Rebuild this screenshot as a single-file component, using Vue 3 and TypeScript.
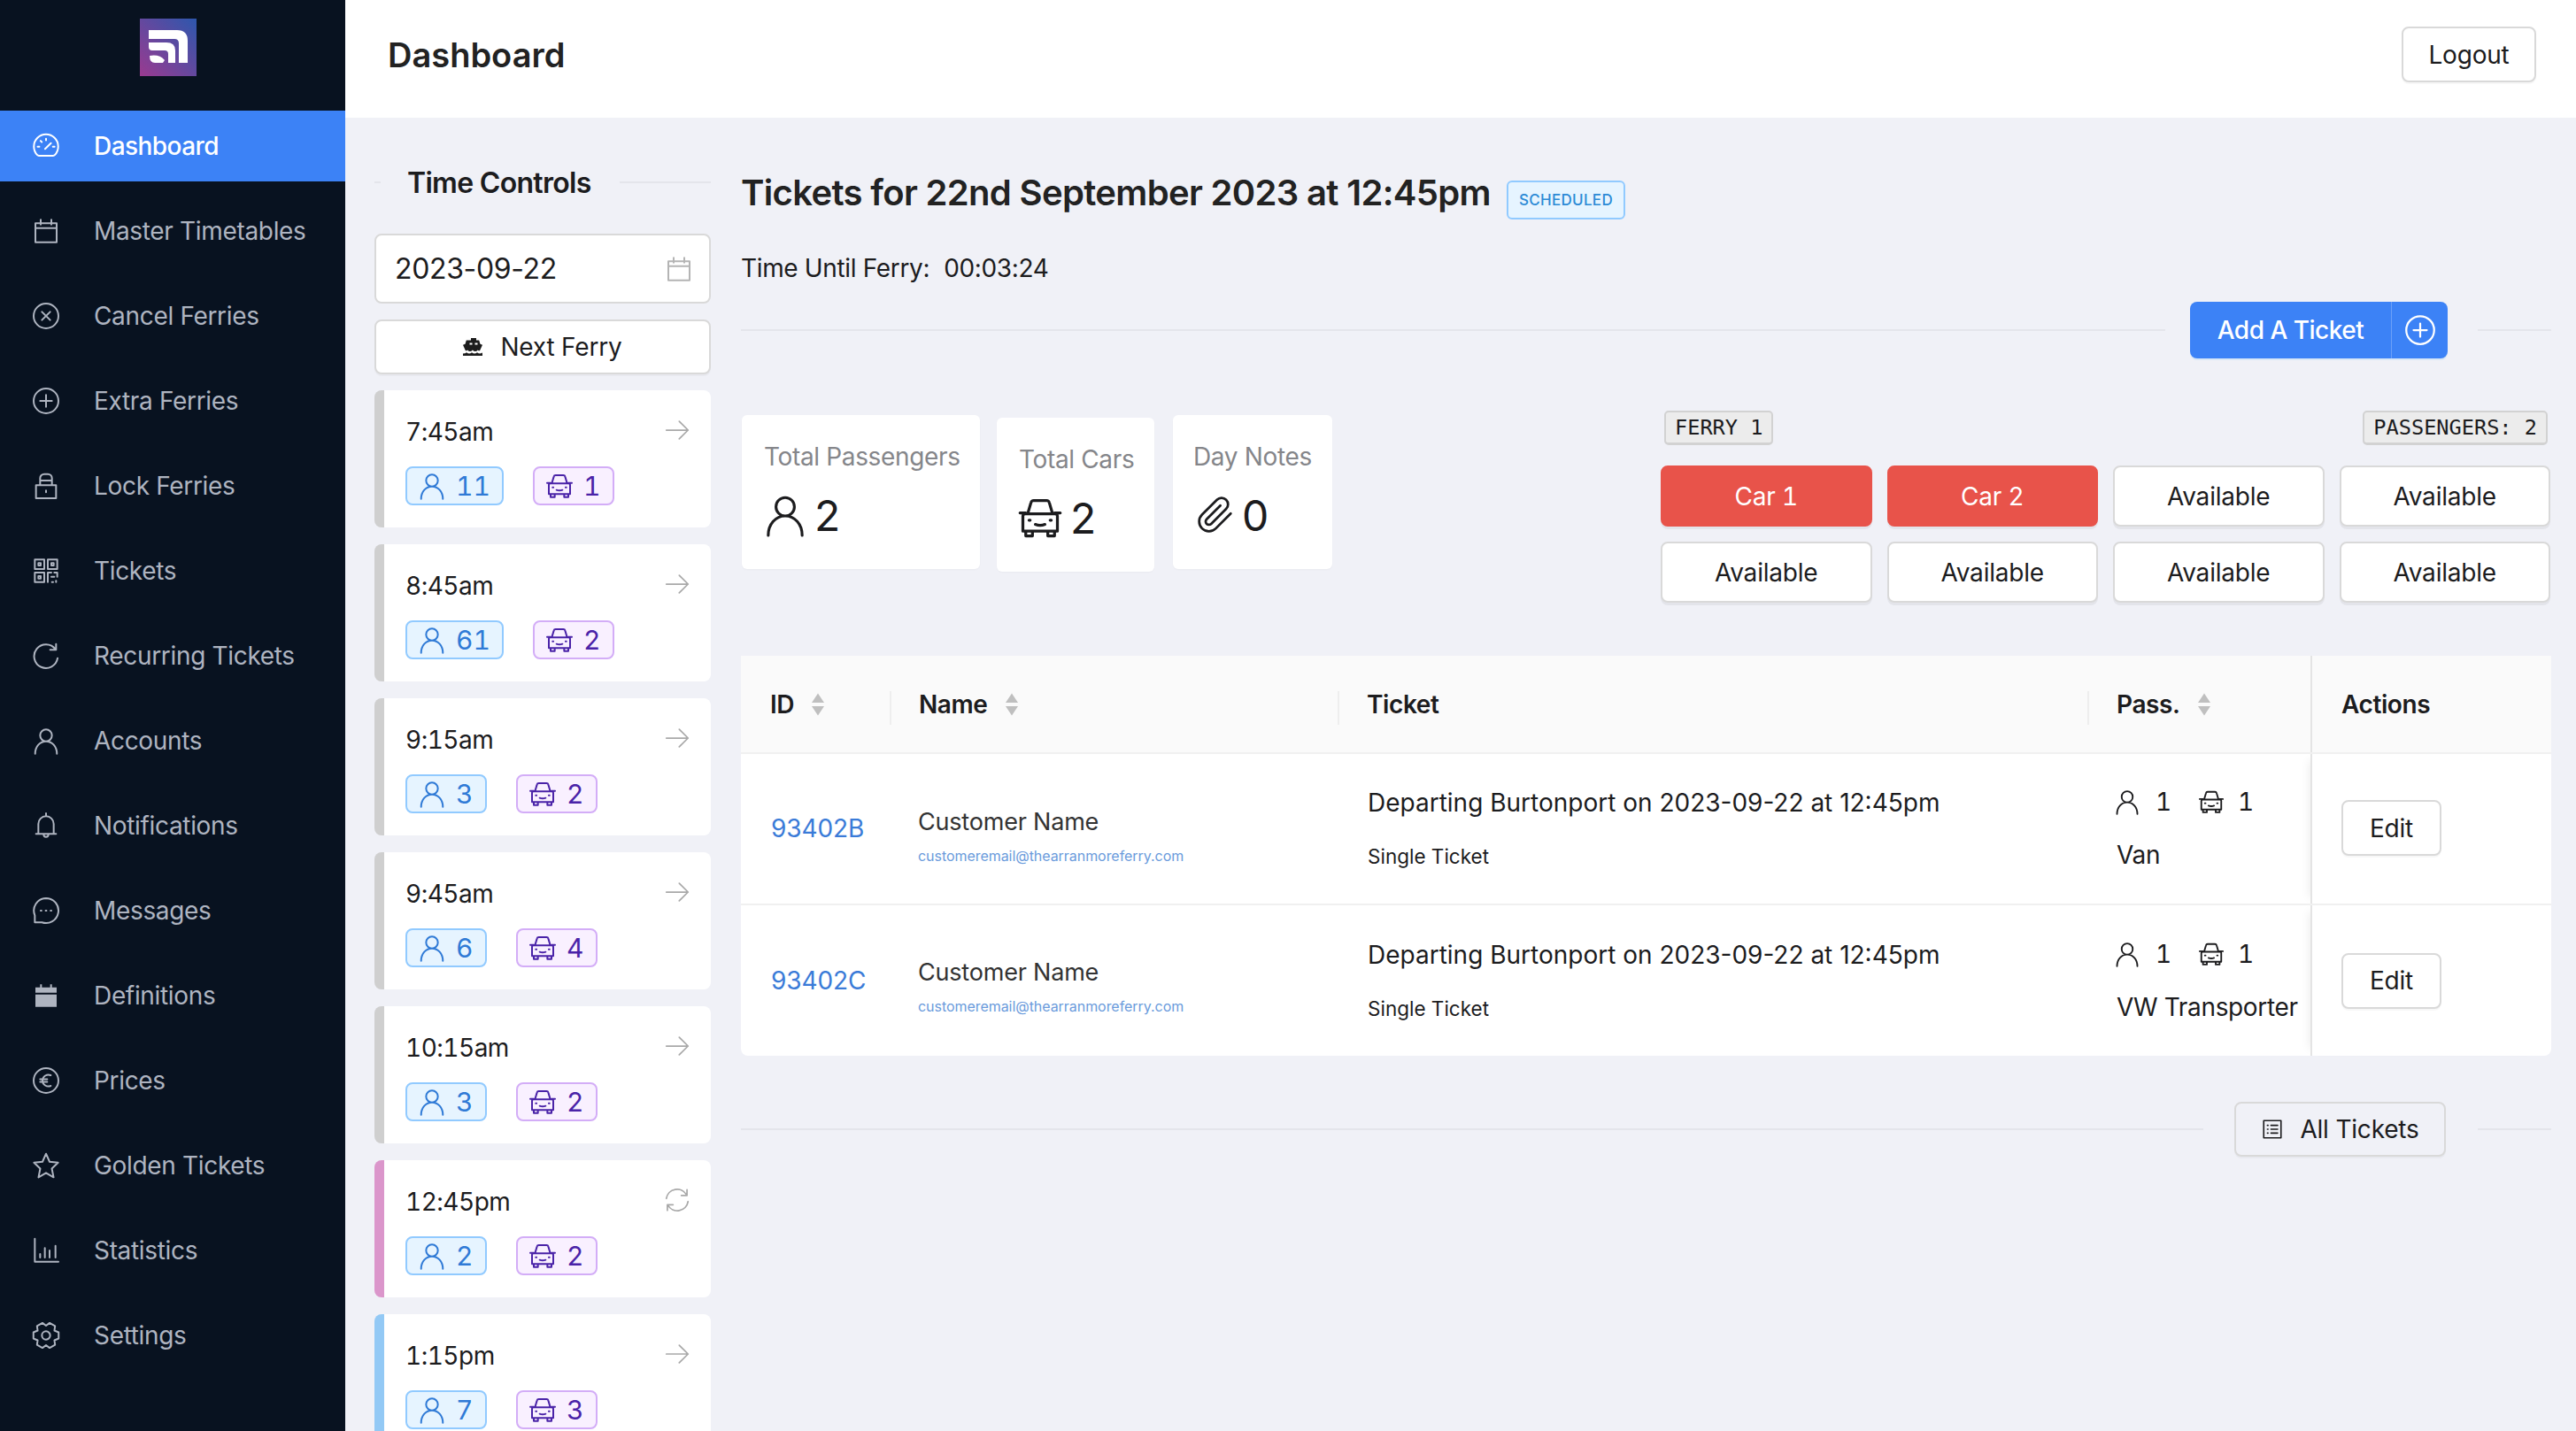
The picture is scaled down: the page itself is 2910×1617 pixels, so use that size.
<script setup lang="ts">
const gear = (() => {
  const pt = (deg: number, r: number) => {
    const a = ((deg - 90) * Math.PI) / 180
    return `${(12 + r * Math.cos(a)).toFixed(2)} ${(12 + r * Math.sin(a)).toFixed(2)}`
  }
  let d = ''
  for (let k = 0; k < 6; k++) {
    const c = k * 60 + 30
    d += `${k === 0 ? 'M' : 'L'}${pt(c - 14, 11)} L${pt(c + 14, 11)} L${pt(c + 30, 8.2)} `
  }
  return d + 'Z M15.5 12a3.5 3.5 0 1 1-7 0 3.5 3.5 0 0 1 7 0Z'
})()

const icons: Record<string, string> = {
  gauge: 'M4.6 19.6A10.3 10.3 0 1 1 19.4 19.6Q18.9 20.2 18 20.2H6Q5.1 20.2 4.6 19.6Z M11.2 14.4 16.2 9.6 M12 5.8v1.4 M7.4 7.6l1 1 M4.9 12.6h1.4 M17.8 12.6h1.4',
  calendar: 'M3 5.5h18v16H3z M3 9.5h18 M7.5 2.5v4 M16.5 2.5v4',
  cancel: 'M12 1.5a10.5 10.5 0 1 1 0 21 10.5 10.5 0 0 1 0-21Z M8.5 8.5l7 7 M15.5 8.5l-7 7',
  plus: 'M12 1.5a10.5 10.5 0 1 1 0 21 10.5 10.5 0 0 1 0-21Z M12 7v10 M7 12h10',
  lock: 'M3.5 11.5h17v11h-17z M7 11.5V5.5a3.5 3.5 0 0 1 3.5-3.5h3A3.5 3.5 0 0 1 17 5.5v6 M7 7.5h10 M12 16v1.5',
  qr: 'M2.5 2.5h8v8h-8z M13.5 2.5h8v8h-8z M2.5 13.5h8v8h-8z M5.5 5.5h2v2h-2z M16.5 5.5h2v2h-2z M5.5 16.5h2v2h-2z M13.5 21.5v-8h3 M19 13.5h2.5v3.5 M16.5 17h2.5 M17 21.5h1 M20.5 20.5v1',
  recur: 'M20 6.5A10 10 0 1 0 21.8 14 M20.5 2v5h-5',
  user: 'M12 2.5a5 5 0 1 1 0 10 5 5 0 0 1 0-10Z M2.8 23c0-6 4-10.5 9.2-10.5S21.2 17 21.2 23',
  bell: 'M3.5 19h17 M5.5 19v-8.5a6.5 6.5 0 0 1 13 0V19 M12 4V1.5 M10 19.5a2 2 0 0 0 4 0',
  msg: 'M12 1.5a10.5 10.5 0 1 1-3.5 20.4H2.5V16A10.5 10.5 0 0 1 12 1.5Z M7.5 12h.6 M11.7 12h.6 M15.9 12h.6',
  euro: 'M12 1.5a10.5 10.5 0 1 1 0 21 10.5 10.5 0 0 1 0-21Z M16 7.5a5 5 0 0 0-7 4.5 5 5 0 0 0 7 4.5 M7 10.8h6 M7 13.2h6',
  star: 'M12 2l3 6.8 7.2.8-5.3 5 1.5 7.4L12 18.2 5.6 22l1.5-7.4-5.3-5 7.2-.8Z',
  stats: 'M2.5 2v19.5h20 M7 18v-3 M11 18v-8 M15 18v-6 M20 18V8',
  gear,
  car: 'M5.5 10l1.7-5.8A1.6 1.6 0 0 1 8.7 3h6.6a1.6 1.6 0 0 1 1.5 1.2L18.5 10 M4.2 10h15.6A1.2 1.2 0 0 1 21 11.2V19H3v-7.8A1.2 1.2 0 0 1 4.2 10Z M4.5 19v2.5h3.5V19 M16 19v2.5h3.5V19 M1.5 9.5h3 M19.5 9.5h3 M9.5 15.5q2.5 1 5 0 M6.2 13.3h.6 M17.2 13.3h.6',
  arrow: 'M1.5 12h21 M14 3.5l8.5 8.5-8.5 8.5',
  refresh: 'M1.5 10.5A10.5 10.5 0 0 1 21 7 M21.5 2v5.5H16 M22.5 13.5A10.5 10.5 0 0 1 3 17 M2.5 22v-5.5H8',
  clip: 'M21.44 11.05l-9.19 9.19a6 6 0 0 1-8.49-8.49l9.19-9.19a4 4 0 0 1 5.66 5.66l-9.2 9.19a2 2 0 0 1-2.83-2.83l8.49-8.48',
  list: 'M3 3h18v18H3z M10.5 8h7 M10.5 12h7 M10.5 16h7 M6.8 8h.7 M6.8 12h.7 M6.8 16h.7',
}

const navItems = [
  { label: 'Dashboard', icon: 'gauge', active: true },
  { label: 'Master Timetables', icon: 'calendar' },
  { label: 'Cancel Ferries', icon: 'cancel' },
  { label: 'Extra Ferries', icon: 'plus' },
  { label: 'Lock Ferries', icon: 'lock' },
  { label: 'Tickets', icon: 'qr' },
  { label: 'Recurring Tickets', icon: 'recur' },
  { label: 'Accounts', icon: 'user' },
  { label: 'Notifications', icon: 'bell' },
  { label: 'Messages', icon: 'msg' },
  { label: 'Definitions', icon: 'solid' },
  { label: 'Prices', icon: 'euro' },
  { label: 'Golden Tickets', icon: 'star' },
  { label: 'Statistics', icon: 'stats' },
  { label: 'Settings', icon: 'gear' },
]

const times = [
  { time: '7:45am', pax: '11', cars: '1', tone: 'grey', icon: 'arrow' },
  { time: '8:45am', pax: '61', cars: '2', tone: 'grey', icon: 'arrow' },
  { time: '9:15am', pax: '3', cars: '2', tone: 'grey', icon: 'arrow' },
  { time: '9:45am', pax: '6', cars: '4', tone: 'grey', icon: 'arrow' },
  { time: '10:15am', pax: '3', cars: '2', tone: 'grey', icon: 'arrow' },
  { time: '12:45pm', pax: '2', cars: '2', tone: 'pink', icon: 'refresh' },
  { time: '1:15pm', pax: '7', cars: '3', tone: 'blue', icon: 'arrow' },
]

const stats = [
  { label: 'Total Passengers', value: '2', icon: 'user', cls: 'stat-a' },
  { label: 'Total Cars', value: '2', icon: 'car', cls: 'stat-b' },
  { label: 'Day Notes', value: '0', icon: 'clip', cls: 'stat-c' },
]

const spaces = ['Car 1', 'Car 2', 'Available', 'Available', 'Available', 'Available', 'Available', 'Available']

const tickets = [
  { id: '93402B', vehicle: 'Van' },
  { id: '93402C', vehicle: 'VW Transporter' },
]
</script>

<template>
  <div class="app">
    <aside class="sidebar">
      <div class="logo-wrap">
        <svg class="logo" viewBox="0 0 64 65">
          <defs>
            <linearGradient id="lg" x1="0" y1="1" x2="1" y2="0">
              <stop offset="0" stop-color="#9a3a90" />
              <stop offset="1" stop-color="#2d57ad" />
            </linearGradient>
          </defs>
          <rect width="64" height="65" fill="url(#lg)" />
          <path fill="#fff" d="M10 13H42Q54 13 54 25V50H44V28Q44 23 39 23H10Z M10 27H30Q40 27 40 36V50H32V40Q32 36 28 36H14Q10 36 10 32Z M11 42Q22 40 28 47L26 50H17Q11 50 11 42Z" />
        </svg>
      </div>
      <nav class="nav">
        <a v-for="item in navItems" :key="item.label" class="nav-item" :class="{ active: item.active }">
          <svg v-if="item.icon === 'solid'" class="nav-icon" viewBox="0 0 24 24">
            <path class="solid" d="M3 5h18v4.5H3z M3 11h18v10.5H3z M7 2.5h1.5V5H7z M15.5 2.5H17V5h-1.5z" />
          </svg>
          <svg v-else class="nav-icon" viewBox="0 0 24 24"><path class="line" :d="icons[item.icon]" /></svg>
          <span>{{ item.label }}</span>
        </a>
      </nav>
    </aside>

    <div class="page">
      <header class="topbar">
        <h1>Dashboard</h1>
        <button class="btn logout">Logout</button>
      </header>

      <div class="content">
        <section class="times">
          <div class="divider-head"><i class="stub"></i><h2>Time Controls</h2><i class="rule"></i></div>
          <div class="date-input">
            <span>2023-09-22</span>
            <svg class="date-ic" viewBox="0 0 24 24"><path class="line" :d="icons.calendar" /></svg>
          </div>
          <button class="btn next">
            <svg class="ferry-ic" viewBox="0 0 24 20">
              <path fill="#1c1c1c" d="M9 0h6v2.5h3.2l1.3 4.3 2.5 1-3 6.4q-1.3.3-2.2-.8-1.3 1.6-2.9 1.6t-3-1.6q-1.3 1.6-2.9 1.6t-2.9-1.6q-.9 1.1-2.2.8L0 7.8l2.5-1 1.3-4.3H9Z M0 17.5q3 0 4-1.2 1.5 1.2 3 1.2t3-1.2q1.5 1.2 3 1.2t3-1.2q1.5 1.2 3 1.2t2-.8 1 .8V20H0Z" />
              <path fill="#fff" d="M7.5 5.5h3v2h-3z M13.5 5.5h3v2h-3z" />
            </svg>
            <span>Next Ferry</span>
          </button>
          <div class="time-list">
            <article v-for="t in times" :key="t.time" class="time-card" :class="t.tone">
              <div class="time-top">
                <span>{{ t.time }}</span>
                <svg class="t-ic" viewBox="0 0 24 24"><path class="line" :d="icons[t.icon]" /></svg>
              </div>
              <div class="tags">
                <span class="tag pax">
                  <svg class="tag-ic" viewBox="0 0 24 24"><path class="line" :d="icons.user" /></svg>{{ t.pax }}
                </span>
                <span class="tag cars">
                  <svg class="tag-ic" viewBox="0 0 24 24"><path class="line" :d="icons.car" /></svg>{{ t.cars }}
                </span>
              </div>
            </article>
          </div>
        </section>

        <section class="detail">
          <div class="title-row">
            <h2>Tickets for 22nd September 2023 at 12:45pm</h2>
            <span class="status">SCHEDULED</span>
          </div>
          <p class="until"><span>Time Until Ferry:</span><span>00:03:24</span></p>

          <div class="action-row">
            <i class="rule"></i>
            <div class="split-btn">
              <span class="split-main">Add A Ticket</span>
              <span class="split-ic"><svg viewBox="0 0 24 24"><path class="line" :d="icons.plus" /></svg></span>
            </div>
            <i class="rule end"></i>
          </div>

          <div class="summary">
            <div class="stats">
              <div v-for="s in stats" :key="s.label" class="stat" :class="s.cls">
                <div class="stat-label">{{ s.label }}</div>
                <div class="stat-value">
                  <svg class="stat-ic" viewBox="0 0 24 24"><path class="line" :d="icons[s.icon]" /></svg>
                  <span>{{ s.value }}</span>
                </div>
              </div>
            </div>
            <div class="ferry">
              <div class="ferry-tags">
                <kbd>FERRY 1</kbd>
                <kbd>PASSENGERS: 2</kbd>
              </div>
              <div class="spaces">
                <button v-for="(s, i) in spaces" :key="i" class="btn space" :class="{ taken: s !== 'Available' }">{{ s }}</button>
              </div>
            </div>
          </div>

          <table class="table">
            <colgroup>
              <col class="c-id" /><col class="c-name" /><col class="c-ticket" /><col class="c-pass" /><col class="c-act" />
            </colgroup>
            <thead>
              <tr>
                <th>
                  <span class="th">ID<svg class="sort" viewBox="0 0 16 28"><path d="M8 1.5l7 10.5H1zM8 26.5l7-10.5H1z" /></svg></span>
                </th>
                <th class="has-sep">
                  <span class="th">Name<svg class="sort" viewBox="0 0 16 28"><path d="M8 1.5l7 10.5H1zM8 26.5l7-10.5H1z" /></svg></span>
                </th>
                <th class="has-sep"><span class="th">Ticket</span></th>
                <th class="has-sep">
                  <span class="th">Pass.<svg class="sort" viewBox="0 0 16 28"><path d="M8 1.5l7 10.5H1zM8 26.5l7-10.5H1z" /></svg></span>
                </th>
                <th class="fixed-col"><span class="th">Actions</span></th>
              </tr>
            </thead>
            <tbody>
              <tr v-for="t in tickets" :key="t.id">
                <td class="id-cell"><a class="ticket-id">{{ t.id }}</a></td>
                <td class="name-cell">
                  <div class="cust">Customer Name</div>
                  <a class="email">customeremail@thearranmoreferry.com</a>
                </td>
                <td class="ticket-cell">
                  <div class="dep">Departing Burtonport on 2023-09-22 at 12:45pm</div>
                  <div class="single">Single Ticket</div>
                </td>
                <td>
                  <div class="pass-line">
                    <svg class="p-ic" viewBox="0 0 24 24"><path class="line" :d="icons.user" /></svg><span class="p-n">1</span>
                    <svg class="p-ic car-p" viewBox="0 0 24 24"><path class="line" :d="icons.car" /></svg><span class="p-n last">1</span>
                  </div>
                  <div class="vehicle">{{ t.vehicle }}</div>
                </td>
                <td class="fixed-col"><button class="btn edit">Edit</button></td>
              </tr>
            </tbody>
          </table>

          <div class="action-row bottom">
            <i class="rule"></i>
            <button class="btn all">
              <svg class="all-ic" viewBox="0 0 24 24"><path class="line" :d="icons.list" /></svg>
              <span>All Tickets</span>
            </button>
            <i class="rule end"></i>
          </div>
        </section>
      </div>
    </div>
  </div>
</template>

<style>
html, body { margin: 0; padding: 0; overflow: hidden; background: #f0f1f7; }
</style>

<style scoped>
* { box-sizing: border-box; }
.app {
  display: flex;
  width: 2910px;
  height: 1617px;
  overflow: hidden;
  font-family: Inter, "Liberation Sans", sans-serif;
  color: #1c1c1e;
  background: #f0f1f7;
}
.line { fill: none; stroke: currentColor; stroke-width: 1.5; stroke-linecap: round; stroke-linejoin: round; }
.solid { fill: currentColor; }

.sidebar { width: 390px; flex: none; background: #081220; }
.logo-wrap { height: 125px; padding: 21px 10px 0 0; display: flex; justify-content: center; }
.logo { width: 64px; height: 65px; display: block; }
.nav { display: flex; flex-direction: column; gap: 16px; }
.nav-item {
  height: 80px;
  display: flex;
  align-items: center;
  padding-left: 36px;
  gap: 38px;
  font-size: 28px;
  letter-spacing: -.33px;
  color: #aeb4c0;
}
.nav-item.active { background: #3c82f6; color: #fff; font-weight: 500; letter-spacing: -.55px; }
.nav-icon { width: 32px; height: 32px; flex: none; }

.page { flex: 1; min-width: 0; display: flex; flex-direction: column; }
.topbar {
  height: 133px;
  flex: none;
  background: #fff;
  display: flex;
  align-items: center;
  justify-content: space-between;
  padding: 0 45px 10px 48px;
}
.topbar h1 { margin: 0; font-size: 38px; font-weight: 600; color: #222; }
.btn {
  font-family: inherit;
  background: #fff;
  border: 2px solid #d9d9d9;
  border-radius: 8px;
  color: #1c1c1e;
  font-size: 28px;
  letter-spacing: -.2px;
  padding: 0;
  box-shadow: 0 2px 0 rgba(0, 0, 0, .03);
}
.logout { width: 152px; height: 63px; }

.content { flex: 1; min-height: 0; display: flex; padding: 0 28px 0 33px; gap: 34px; }

.times { width: 380px; flex: none; }
.divider-head { height: 40px; margin-top: 53px; display: flex; align-items: center; }
.divider-head h2 { margin: 0; padding: 0 32px 0 30px; font-size: 32px; font-weight: 600; letter-spacing: -.7px; white-space: nowrap; }
.stub { width: 7px; height: 2px; background: #e4e5eb; }
.rule { flex: 1; height: 2px; background: #e4e5eb; display: block; }
.date-input {
  margin-top: 38px;
  height: 79px;
  background: #fff;
  border: 2px solid #d9d9d9;
  border-radius: 8px;
  display: flex;
  align-items: center;
  justify-content: space-between;
  padding: 0 18px 0 21px;
  font-size: 32px;
  letter-spacing: -.35px;
}
.date-ic { width: 32px; height: 32px; color: #b4b4b4; }
.next {
  width: 100%;
  height: 62px;
  margin-top: 18px;
  display: flex;
  align-items: center;
  justify-content: center;
  gap: 18px;
}
.ferry-ic { width: 24px; height: 20px; }
.time-list { display: flex; flex-direction: column; gap: 19px; margin-top: 18px; }
.time-card {
  height: 155px;
  flex: none;
  background: #fff;
  border-left: 11px solid #cfcfcf;
  border-radius: 8px;
  padding: 27px 24px 0 24px;
}
.time-card.pink { border-left-color: #db96cb; }
.time-card.blue { border-left-color: #93c9f5; }
.time-top {
  display: flex;
  justify-content: space-between;
  align-items: center;
  height: 40px;
  font-size: 28px;
  letter-spacing: -.5px;
  font-variant-numeric: tabular-nums;
}
.t-ic { width: 28px; height: 28px; color: #a9a9a9; margin-top: -4px; }
.tags { display: flex; gap: 33px; margin-top: 19px; }
.tag {
  height: 44px;
  min-width: 92px;
  display: flex;
  align-items: center;
  gap: 11px;
  padding: 0 13px 0 12px;
  border-radius: 8px;
  border: 2px solid;
  font-size: 30px;
  font-variant-numeric: tabular-nums;
}
.tag-ic { width: 32px; height: 32px; flex: none; }
.pax { background: #e6f4ff; border-color: #91caff; color: #2f7ad6; }
.cars { background: #f9f0ff; border-color: #d3adf7; color: #4a23a8; }

.detail { flex: 1; min-width: 0; }
.title-row { display: flex; align-items: center; gap: 18px; margin-top: 60px; height: 48px; }
.title-row h2 { margin: 0; font-size: 40px; font-weight: 600; letter-spacing: -.66px; white-space: nowrap; color: #222; }
.status {
  height: 44px;
  width: 134px;
  margin-top: 18px;
  display: flex;
  align-items: center;
  justify-content: center;
  background: #e6f4ff;
  border: 2px solid #91caff;
  border-radius: 6px;
  color: #2b8ad6;
  font-size: 17px;
  font-weight: 500;
  letter-spacing: .3px;
}
.until { margin: 42px 0 0; height: 40px; display: flex; align-items: center; gap: 16px; font-size: 28px; letter-spacing: -.35px; }

.action-row { display: flex; align-items: center; margin-top: 18px; }
.action-row .rule.end { flex: none; width: 83px; margin-left: 34px; }
.split-btn {
  margin-left: 28px;
  height: 64px;
  width: 291px;
  display: flex;
  background: #3c82f6;
  color: #fff;
  border-radius: 8px;
  font-size: 28px;
  font-weight: 500;
  letter-spacing: -.5px;
  box-shadow: 0 2px 0 rgba(5, 145, 255, .1);
}
.split-main { flex: 1; display: flex; align-items: center; justify-content: center; }
.split-ic {
  width: 64px;
  display: flex;
  align-items: center;
  justify-content: center;
  border-left: 1px solid #6ba0f8;
}
.split-ic svg { width: 36px; height: 36px; }

.summary { display: flex; justify-content: space-between; margin-top: 59px; padding: 0 1px; }
.stats { display: flex; align-items: flex-start; padding-top: 5px; }
.stat {
  height: 174px;
  background: #fff;
  border-radius: 6px;
  padding: 30px 25px 0;
  box-shadow: 0 1px 2px rgba(0, 0, 0, .03);
}
.stat-a { width: 269px; }
.stat-b { width: 178px; margin: 3px 21px 0 19px; }
.stat-c { width: 180px; padding-left: 23px; }
.stat-label { font-size: 28px; letter-spacing: -.35px; color: #85868a; white-space: nowrap; line-height: 34px; }
.stat-value { display: flex; align-items: center; gap: 8px; font-size: 48px; margin-top: 16px; height: 66px; }
.stat-ic { width: 50px; height: 50px; flex: none; margin-left: -1px; }
.stat-b .stat-ic { width: 52px; height: 52px; margin-left: -2px; }
.stat-c .stat-ic { width: 44px; height: 44px; margin-left: 3px; }

.ferry { width: 1005px; }
.ferry-tags { display: flex; justify-content: space-between; padding: 0 3px 0 4px; height: 39px; }
kbd {
  height: 39px;
  display: flex;
  align-items: center;
  padding: 0 10px;
  background: #ececec;
  border: 2px solid #d2d2d2;
  border-bottom-width: 3px;
  border-radius: 5px;
  font-family: "DejaVu Sans Mono", "Liberation Mono", monospace;
  font-size: 23.6px;
  white-space: pre;
  color: #1c1c1e;
}
.spaces { display: grid; grid-template-columns: repeat(4, 1fr); gap: 17px; margin-top: 23px; }
.space { height: 69px; box-shadow: 0 3px 0 rgba(0, 0, 0, .05); font-variant-numeric: tabular-nums; }
.space.taken { background: #e8534a; border-color: #e8534a; color: #fff; }

.table {
  width: 100%;
  margin-top: 60px;
  border-collapse: collapse;
  table-layout: fixed;
  background: #fff;
  border-radius: 8px;
  font-size: 28px;
}
.c-id { width: 168px; }
.c-name { width: 506px; }
.c-ticket { width: 847px; }
.c-pass { width: 253px; }
.c-act { width: 271px; }
th {
  height: 110px;
  background: #fafafa;
  text-align: left;
  padding: 0 0 0 33px;
  font-weight: 600;
  letter-spacing: -.4px;
  border-bottom: 2px solid #f0f0f0;
  position: relative;
}
th.has-sep::before {
  content: "";
  position: absolute;
  left: 0;
  top: 40px;
  height: 38px;
  width: 2px;
  background: #eeeeee;
}
.th { display: inline-flex; align-items: center; gap: 19px; }
.sort { width: 16px; height: 28px; fill: #bfbfbf; }
td { height: 171px; padding: 0 0 2px 33px; border-bottom: 2px solid #f0f0f0; vertical-align: middle; }
tbody tr:last-child td { border-bottom: none; padding-bottom: 0; }
.fixed-col { border-left: 2px solid #e4e4e4; box-shadow: -10px 0 10px -8px rgba(0, 0, 0, .08); }
.id-cell { padding-left: 34px; }
.ticket-id { color: #3a7bd8; font-size: 28px; letter-spacing: -.1px; }
.name-cell { padding-top: 19px; padding-left: 32px; }
tbody tr:last-child .name-cell { padding-top: 13px; }
.cust { font-size: 27px; letter-spacing: -.2px; line-height: 36px; color: #333; }
.email { display: block; color: #6a9bdc; font-size: 16px; letter-spacing: -.05px; margin-top: 8px; line-height: 24px; }
.ticket-cell { padding-left: 34px; }
.dep { font-size: 28px; line-height: 36px; }
.single { font-size: 22.5px; line-height: 30px; margin-top: 28px; }
.pass-line { display: flex; align-items: center; height: 36px; font-variant-numeric: tabular-nums; }
.p-ic { width: 30px; height: 30px; flex: none; margin-left: -3px; }
.p-n { margin-left: 17px; width: 20px; }
.car-p { margin-left: 28px; }
.p-n.last { margin-left: 15px; }
.vehicle { font-size: 28px; letter-spacing: -.35px; line-height: 36px; margin-top: 24px; white-space: nowrap; }
.edit { width: 113px; height: 63px; }

.action-row.bottom { margin-top: 52px; }
.action-row.bottom .rule.end { margin-left: 36px; }
.all {
  margin-left: 35px;
  width: 239px;
  height: 62px;
  display: flex;
  align-items: center;
  justify-content: center;
  gap: 18px;
  background: #f0f1f7;
}
.all-ic { width: 26px; height: 26px; }
</style>
